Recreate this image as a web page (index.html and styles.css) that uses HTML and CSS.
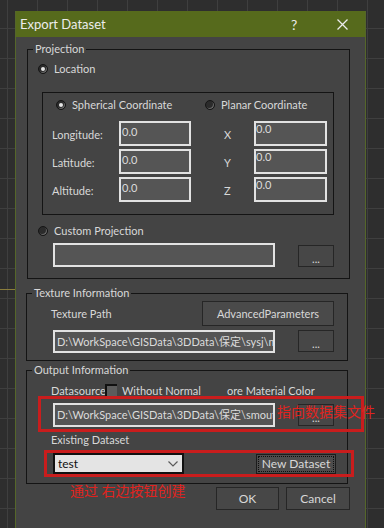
FILE: index.html
```html
<!DOCTYPE html>
<html lang="en">
<head>
  <meta charset="UTF-8">
  <title>Export Dataset</title>
  <link rel="stylesheet" href="styles.css">
</head>
<body>
  <div class="dialog">
    <div class="titlebar">
      <span class="title">Export Dataset</span>
      <span class="help">?</span>
      <svg class="close" width="11" height="11" viewBox="0 0 11 11">
        <path d="M0.5 0.5 L10.5 10.5 M10.5 0.5 L0.5 10.5" stroke="#ececec" stroke-width="1.3" fill="none"/>
      </svg>
    </div>

    <div class="dialog-body">
      <fieldset class="group group-projection">
        <legend>Projection</legend>
        <div class="opt loc-row"><span class="radio on"></span>Location</div>

        <div class="coord-box">
          <div class="coord-head">
            <div class="opt"><span class="radio on"></span>Spherical Coordinate</div>
            <div class="opt"><span class="radio"></span>Planar Coordinate</div>
          </div>
          <div class="coord-grid">
            <span class="lbl">Longitude:</span>
            <div class="field num">0.0</div>
            <span></span>
            <span class="lbl">X</span>
            <div class="field num tight">0.0</div>

            <span class="lbl">Latitude:</span>
            <div class="field num">0.0</div>
            <span></span>
            <span class="lbl">Y</span>
            <div class="field num tight">0.0</div>

            <span class="lbl">Altitude:</span>
            <div class="field num">0.0</div>
            <span></span>
            <span class="lbl">Z</span>
            <div class="field num tight">0.0</div>
          </div>
        </div>

        <div class="opt custom-row"><span class="radio"></span>Custom Projection</div>
        <div class="path-row proj-path">
          <div class="field path tall"></div>
          <button class="btn dots">...</button>
        </div>
      </fieldset>

      <fieldset class="group group-texture">
        <legend>Texture Information</legend>
        <div class="tex-head">
          <span class="tex-label">Texture Path</span>
          <button class="btn adv">AdvancedParameters</button>
        </div>
        <div class="path-row tex-path">
          <div class="field path">D:\WorkSpace\GISData\3DData\保定\sysj\mesh\textures</div>
          <button class="btn dots">...</button>
        </div>
      </fieldset>

      <fieldset class="group group-output">
        <legend>Output Information</legend>
        <div class="ds-row">
          <span class="ds-label">Datasource</span>
          <span class="check"></span>
          <span class="ds-normal">Without Normal</span>
          <span>ore Material Color</span>
        </div>
        <div class="path-row out-path">
          <div class="field path tall">D:\WorkSpace\GISData\3DData\保定\smout\data.udb</div>
          <button class="btn dots">...</button>
        </div>
        <div class="exist-label">Existing Dataset</div>
        <div class="exist-row">
          <div class="combo">
            <span>test</span>
            <svg width="10" height="6" viewBox="0 0 10 6">
              <path d="M0.5 0.5 L5 5 L9.5 0.5" stroke="#5a5a5a" stroke-width="1.2" fill="none"/>
            </svg>
          </div>
          <button class="btn new-ds">New Dataset</button>
        </div>
      </fieldset>

      <div class="actions">
        <button class="btn ok">OK</button>
        <button class="btn cancel">Cancel</button>
      </div>
    </div>

    <!-- red annotations drawn over the dialog -->
    <div class="mark mark-path"></div>
    <div class="mark mark-combo"></div>
    <div class="note note-path">指向数据集文件</div>
    <div class="note note-combo">通过 右边按钮创建</div>
  </div>
</body>
</html>
```

FILE: styles.css
```css
* {
  box-sizing: border-box;
}
body {
  margin: 0;
  width: 384px;
  height: 528px;
  overflow: hidden;
  padding: 11px 0 0 15px;
  background-color: #2e2e2e;
  background-image:
    linear-gradient(#8a7d3c, #8a7d3c),
    linear-gradient(90deg, #3f3f3f 1px, transparent 1px),
    linear-gradient(#3f3f3f 1px, transparent 1px);
  background-size: 15px 1px, 30px 30px, 30px 30px;
  background-position: 0 289px, 7px 0, 0 28px;
  background-repeat: no-repeat, repeat, repeat;
  font-family: Lato, "Noto Sans CJK SC", sans-serif;
  font-size: 11px;
  color: #d8d8d8;
}
button {
  font-family: inherit;
  font-size: 11px;
  color: #d8d8d8;
  padding: 0;
}

.dialog {
  position: relative;
  width: 351px;
  height: 530px;
  background: #444444;
  border-left: 1px solid #55662a;
  border-right: 1px solid #55662a;
}
.titlebar {
  display: flex;
  align-items: center;
  height: 26px;
  padding-left: 4px;
  background: #566a1c;
  color: #ececec;
  font-size: 13px;
}
.title {
  flex: 1;
}
.help {
  width: 8px;
  font-size: 14px;
}
.close {
  margin: 1px 17px 0 38px;
}

.dialog-body {
  padding-top: 5px;
}

.group {
  margin: 0;
  padding: 0;
  min-width: 0;
  border: 1px solid #141414;
}
.group legend {
  margin-left: 5px;
  padding: 0 2px;
  line-height: 14px;
}
.group-projection {
  width: 323px;
  margin-left: 11px;
  padding: 6px 0 11px;
}
.group-texture {
  width: 322px;
  margin: 7px 0 0 10px;
  padding: 1px 0 7px;
}
.group-output {
  width: 322px;
  margin: 2px 0 0 10px;
  padding: 6px 0 9px;
}

.opt {
  display: flex;
  align-items: center;
  height: 14px;
  line-height: 14px;
}
.radio {
  width: 10px;
  height: 10px;
  margin-right: 6px;
  border-radius: 50%;
  background: #2b2b2b;
  border: 1px solid #151515;
  box-shadow: inset -1px -1px 0 #6a6a6a;
  display: flex;
  align-items: center;
  justify-content: center;
}
.radio.on::after {
  content: "";
  width: 4px;
  height: 4px;
  border-radius: 50%;
  background: #e6e6e6;
}
.loc-row {
  margin-left: 10px;
}

.coord-box {
  width: 292px;
  margin: 16px 0 0 14px;
  padding: 5px 0 12px;
  border: 1px solid #141414;
}
.coord-head {
  display: grid;
  grid-template-columns: 149px auto;
  margin-left: 13px;
}
.coord-grid {
  display: grid;
  grid-template-columns: 67px 72px 33px 30px 73px;
  grid-auto-rows: 25px;
  row-gap: 3px;
  align-items: center;
  margin-top: 9px;
  padding-left: 9px;
}
.lbl {
  padding-top: 2px;
}

.field {
  height: 24px;
  background: #555555;
  border: 2px solid #e2e2e2;
  color: #dcdcdc;
  white-space: nowrap;
  overflow: hidden;
}
.field.num {
  height: 25px;
  padding: 2px 1px 0;
  line-height: 14px;
}
.field.num.tight {
  padding: 0;
  line-height: 12px;
}
.field.path {
  width: 222px;
  height: 23px;
  padding: 0 2px;
  line-height: 19px;
}
.field.path.tall {
  height: 24px;
  line-height: 20px;
}

.custom-row {
  margin: 9px 0 0 10px;
}
.path-row {
  display: flex;
  align-items: flex-start;
}
.proj-path {
  margin: 5px 0 0 25px;
}
.proj-path .dots {
  margin-top: 2px;
}

.btn {
  background: #474747;
  border: 1px solid #262626;
  line-height: 1;
}
.dots {
  width: 36px;
  height: 22px;
  margin-left: 23px;
  padding-top: 4px;
}

.tex-head {
  display: flex;
  align-items: center;
  height: 25px;
  margin-left: 24px;
}
.tex-label {
  width: 151px;
}
.adv {
  width: 132px;
  height: 25px;
  background: #4a4a4a;
}
.tex-path {
  margin: 4px 0 0 26px;
}

.ds-row {
  display: flex;
  align-items: center;
  height: 14px;
  margin-left: 24px;
  white-space: nowrap;
}
.ds-label {
  width: 54px;
}
.check {
  width: 12px;
  height: 12px;
  background: #5c5c5c;
  border-left: 2px solid #111;
  border-top: 2px solid #111;
}
.ds-normal {
  width: 105px;
  margin-left: 5px;
}
.out-path {
  margin: 6px 0 0 26px;
}
.out-path .dots {
  margin-top: 1px;
}
.exist-label {
  margin: 6px 0 0 24px;
  line-height: 14px;
}
.exist-row {
  display: flex;
  align-items: flex-start;
  margin: 6px 0 0 26px;
}
.combo {
  display: flex;
  align-items: center;
  justify-content: space-between;
  width: 131px;
  height: 21px;
  padding: 0 4px 0 3px;
  background: #e4e4e4;
  border: 2px solid #111;
  color: #111;
  font-size: 12px;
}
.new-ds {
  width: 80px;
  height: 20px;
  margin: 1px 0 0 72px;
  background: #4c4c4c;
  border-color: #1c1c1c;
  outline: 1px dotted #0e0e0e;
  outline-offset: -3px;
  font-size: 12px;
}

.actions {
  display: flex;
  justify-content: flex-end;
  gap: 7px;
  margin-top: 3px;
  padding-right: 15px;
}
.ok {
  width: 63px;
  height: 23px;
  font-size: 12px;
}
.cancel {
  width: 64px;
  height: 23px;
  font-size: 12px;
}

.mark {
  position: absolute;
  border: 3px solid #c91d1d;
}
.mark-path {
  left: 22px;
  top: 385px;
  width: 326px;
  height: 36px;
}
.mark-combo {
  left: 28px;
  top: 439px;
  width: 310px;
  height: 27px;
}
.note {
  position: absolute;
  font-size: 14px;
  line-height: 16px;
  color: #e0231e;
  white-space: nowrap;
}
.note-path {
  left: 261px;
  top: 393px;
}
.note-combo {
  left: 54px;
  top: 472px;
}
```
